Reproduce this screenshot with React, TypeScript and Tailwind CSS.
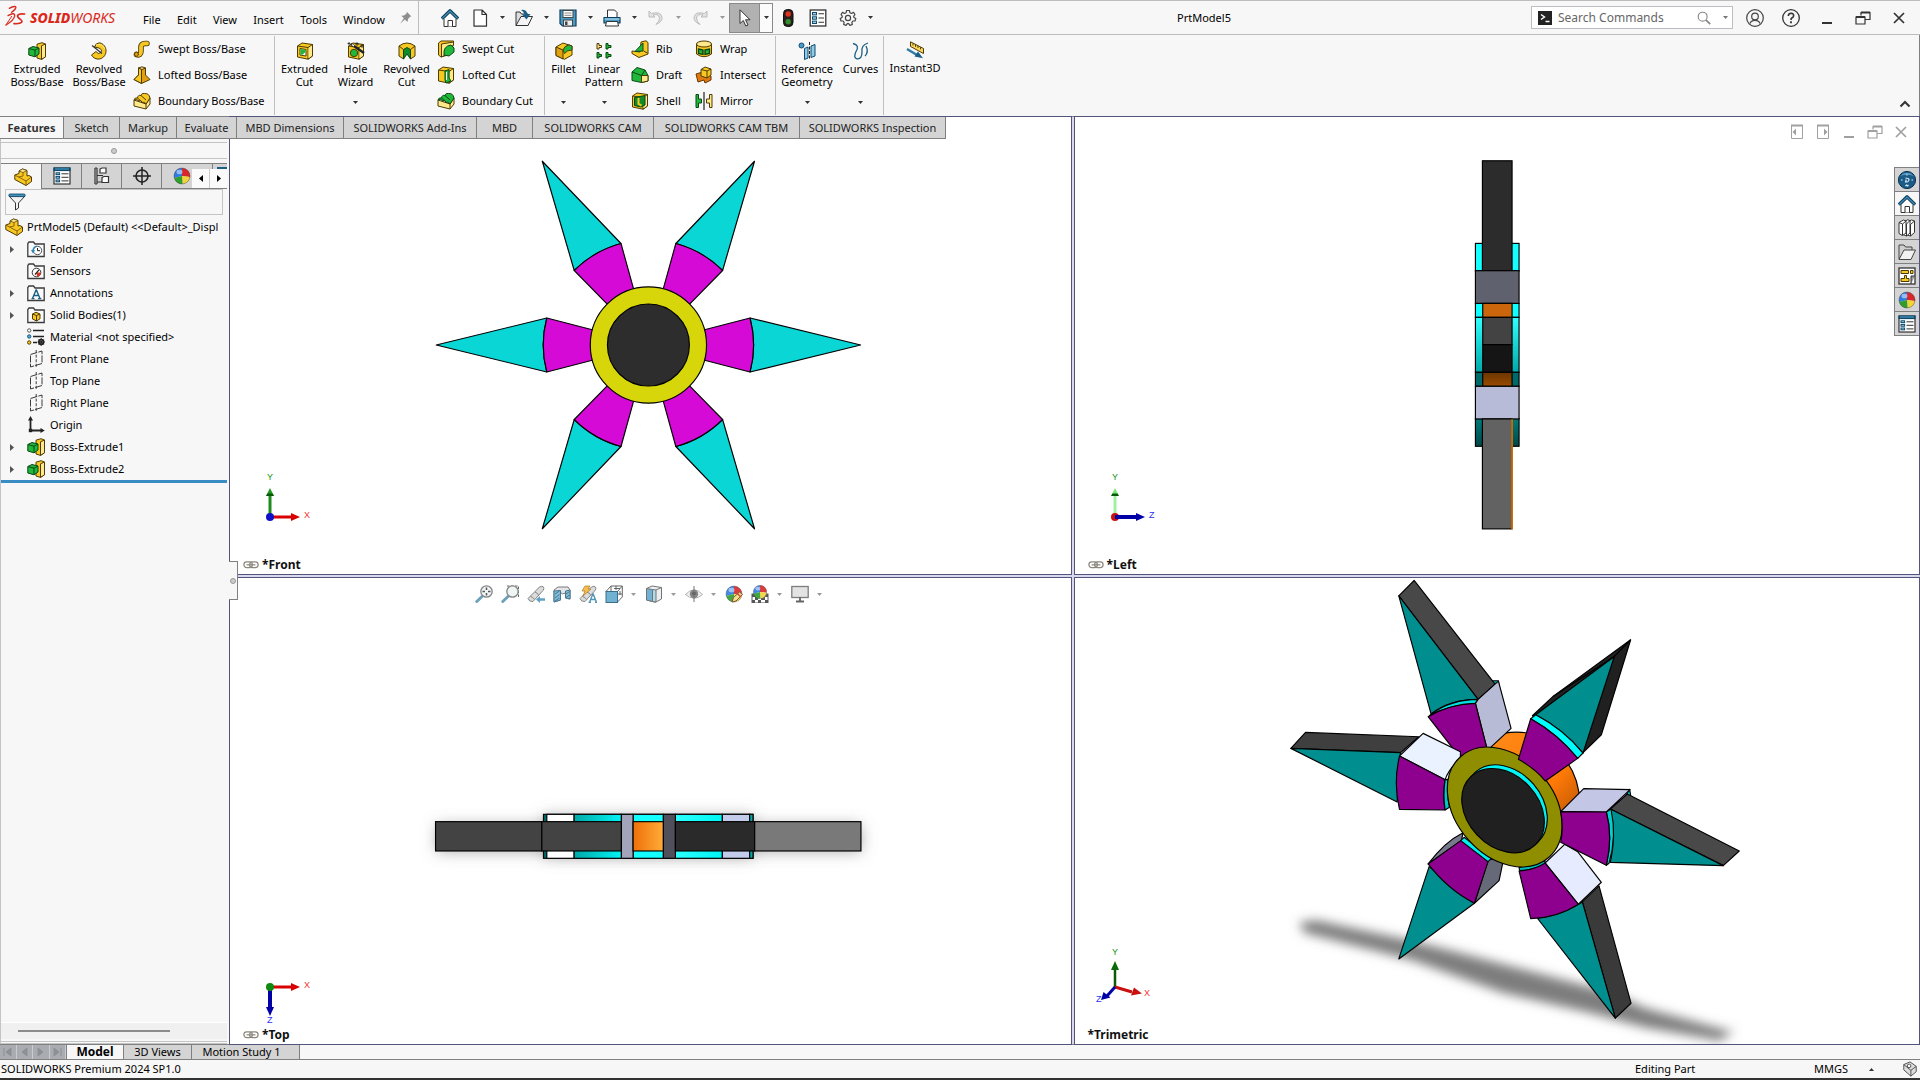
import React from "react";

type IconProps = { name: string; size?: number; className?: string };

const Y = "#f8c822";
const YD = "#e0a010";
const YL = "#ffe98a";
const G = "#1fb83a";
const GD = "#118a28";
const O = "#4f3b05";
const B = "#1b5e86";
const K = "#333333";

const houseIcon = (
  <g strokeLinejoin="round">
    <path d="M3 9.5V17.5H15V9.5L9 3.5Z" fill="#fdfdfd" stroke={K} />
    <path d="M7 17.5V11.5H11.5V17.5" fill="#fff" stroke={K} />
    <path d="M.8 9.6L9 1.6L17.2 9.6" fill="none" stroke="#0d3f5c" strokeWidth="3" />
    <path d="M1.3 9.4L9 2L16.7 9.4" fill="none" stroke="#3f93bf" strokeWidth="1.2" />
  </g>
);

const ball = (
  <g>
    <path d="M9 9L9 1A8 8 0 0 0 1.3 11Z" fill="#2e7be0" />
    <path d="M9 9L9 1A8 8 0 0 1 17 10Z" fill="#d8262a" />
    <path d="M9 9L17 10A8 8 0 0 1 9.5 17Z" fill="#f2d43a" />
    <path d="M9 9L9.5 17A8 8 0 0 1 1.3 11Z" fill="#2e9e2c" />
    <circle cx="9" cy="9" r="8" fill="none" stroke="#333" strokeOpacity=".5" strokeWidth=".8" />
    <ellipse cx="6.5" cy="5" rx="3" ry="2.3" fill="#fff" fillOpacity=".5" />
  </g>
);

const folderBase = (
  <path d="M.8 16.5V3.5L2 2H6.5L8 4H17.2V16.5Z" fill="#fafafa" stroke="#3c3c3c" strokeWidth="1.3" />
);

const planeIcon = (
  <g fill="none" stroke="#3c3c3c">
    <path d="M3.5 4.5L15 1V13.5L3.5 17Z" strokeWidth="1" strokeDasharray="7 1.2" />
    <path d="M9.2 0V18" strokeDasharray="3 1.6" />
  </g>
);

const listIcon = (
  <g>
    <rect x="1.2" y="1" width="15.6" height="16" fill="#fff" stroke={K} strokeWidth="1.3" />
    <g fill="#9fd0e8" stroke="#0d4a6e">
      <rect x="3.5" y="3.5" width="4" height="2.4" />
      <rect x="3.5" y="7.8" width="4" height="2.4" />
      <rect x="3.5" y="12.1" width="4" height="2.4" />
    </g>
    <path d="M9.5 4.8H15M9.5 9H15M9.5 13.3H15" stroke={K} strokeWidth="1.1" />
  </g>
);

const propsIcon = (
  <g>
    <rect x="1" y="1" width="16" height="16" fill="#fff" stroke={K} strokeWidth="1.2" />
    <rect x=".5" y=".5" width="17" height="3.6" fill="#0d4a6e" />
    <path d="M2 2H16" stroke="#56a7cf" />
    <g fill="#9fd0e8" stroke="#0d4a6e">
      <rect x="3" y="5.8" width="3.6" height="1.8" />
      <rect x="3" y="9.4" width="3.6" height="1.8" />
      <rect x="3" y="13" width="3.6" height="1.8" />
    </g>
    <path d="M8.5 6.8H15.5M8.5 10.3H15.5M8.5 13.9H15.5" stroke={K} />
  </g>
);

const partIcon = (
  <g stroke={O} strokeLinejoin="round">
    <path d="M.8 7L5 5.5V3L8.5 1L13 2.5V8L15 7.5L17.5 9V13.5L12 17.5L.8 11.500Z" fill={Y} />
    <path d="M5 3L9 4.5L13 2.5L8.5 1Z" fill={YL} strokeWidth=".7" />
    <path d="M.8 7L4.5 9L9 8V4.5M4.500 9L12 13L17.5 9M12 13V17.5" fill="none" stroke="#8a6208" />
  </g>
);

const extrudeIcon = (
  <g strokeLinejoin="round" stroke={O}>
    <path d="M9 2.2L14 .7L17.5 2V14.8L13.5 17.4L9 16Z" fill={Y} />
    <path d="M13.5 3.8L17.5 2V14.8L13.5 17.4Z" fill={YL} />
    <path d="M.8 6.5L5 4.5L11 6V12L7 14.8L.8 13Z" fill={G} stroke="#0a4716" />
    <path d="M.8 6.5L7 8.2L11 6M7 8.2V14.8" fill="none" stroke="#0a4716" />
  </g>
);

const box = (
  <g stroke={O} strokeLinejoin="round">
    <path d="M1.5 4L6 1L16.5 2.5V14L12 17.2L1.5 15Z" fill={Y} />
    <path d="M1.5 4L12 5.5V17.2L16.5 14V2.5L12 5.5" fill="none" />
    <path d="M12.5 6L16 3.5V13.8L12.5 16.2Z" fill={YL} stroke="none" />
  </g>
);

const waves = (top: string, edge: string) => (
  <g strokeLinejoin="round">
    <path d="M1 8L13 12L17 6V12L13 17L1 14Z" fill={YL} stroke={O} />
    <path d="M13 12V17" stroke={O} />
    <path d="M1 8Q2 5 4.5 6Q5 2.5 8 3.5Q9 .5 11.5 1.5Q16 1 17 6L13 12Q11.5 9 9.5 10.5Q7.5 7 6 9Q3.5 6.5 1 8Z" fill={top} stroke={edge} />
    <path d="M4.5 6L9.5 10.5M8 3.5L13 8" stroke={edge} fill="none" />
  </g>
);

const spyglass = (
  <g strokeLinejoin="round">
    <path d="M1 13.5L12.5 2Q15 .5 16.5 2Q17.5 3.5 16 5.5L6 16.5Q2 17 1 13.5Z" fill="#d9d9d9" stroke="#777" />
    <path d="M3.5 11.5Q6 12 7.5 14.5M8 7Q10 7.5 11.5 10" fill="none" stroke="#777" />
  </g>
);

const lens = (
  <g>
    <path d="M7 11.5L1.8 16.500" stroke="#5f97b5" strokeWidth="3" strokeLinecap="round" />
    <circle cx="11.5" cy="6.5" r="5.7" fill="#eef3f5" stroke="#777" strokeWidth="1.3" />
  </g>
);

const icons: Record<string, React.ReactNode> = {
  home: houseIcon,
  new: <path d="M3 1H11L15.5 5.5V17.2H3ZM11 1V5.5H15.5" fill="#fff" stroke={K} strokeWidth="1.2" strokeLinejoin="round" />,
  open: (
    <g strokeLinejoin="round">
      <path d="M1 16.5V3H5L6.5 5H13V16.5Z" fill="#ddd" stroke={K} />
      <path d="M1 16.5L6 7.5H17.5L13 16.5Z" fill="#f4f4f4" stroke={K} />
      <path d="M6 1Q11 0 12.5 5H15.5L11.5 10.5L7 5.5H9.5Q9 2.5 6 1Z" fill="#1b5e86" />
    </g>
  ),
  save: (
    <g>
      <path d="M1 1H17V17H3.5L1 14.5Z" fill="#4a9cc7" stroke="#0d3f5c" strokeWidth="1.2" />
      <rect x="4" y="1.5" width="10" height="7" fill="#fff" stroke="#444" />
      <path d="M5.5 4H12.5M5.5 6.3H12.5" stroke="#888" />
      <rect x="4.5" y="11" width="9" height="6" fill="#eee" stroke="#444" />
      <rect x="6" y="12.5" width="2.5" height="3.5" fill="#444" />
    </g>
  ),
  print: (
    <g strokeLinejoin="round">
      <path d="M4.5 8V1H11.5L14 3.5V8" fill="#fff" stroke={K} />
      <path d="M1 8.5H17V14H1Z" fill="#4a9cc7" stroke="#0d3f5c" strokeWidth="1.2" />
      <path d="M1.5 10H16.5" stroke="#bfe1f1" />
      <path d="M3.5 12.5H14.5L15.5 17H2.5Z" fill="#fff" stroke={K} />
    </g>
  ),
  undo: <path d="M2 2V8H8L6 6Q12 4.5 12.5 9Q12.5 12.5 9 15.5Q15.5 12.5 15 8.5Q14 2 4.5 4.5Z" fill="#e3e3e3" stroke="#bbb" strokeLinejoin="round" />,
  redo: <path d="M16 2V8H10L12 6Q6 4.5 5.5 9Q5.5 12.5 9 15.5Q2.5 12.5 3 8.5Q4 2 13.5 4.5Z" fill="#e3e3e3" stroke="#bbb" strokeLinejoin="round" />,
  cursor: <path d="M4 .8V14.5L7.3 11.5L9.8 17L12 16L9.5 10.8H14Z" fill="#fff" stroke="#333" strokeLinejoin="round" />,
  traffic: (
    <g>
      <rect x="4.5" y=".5" width="9.5" height="17" rx="4" fill="#2b1d1d" stroke="#111" />
      <circle cx="9.2" cy="5" r="2.7" fill="#e0301e" />
      <circle cx="9.2" cy="12.8" r="2.7" fill="#2f8f2c" />
    </g>
  ),
  options: listIcon,
  gear: (
    <g fill="none" stroke="#444">
      <circle cx="9" cy="9" r="2.6" strokeWidth="1.2" />
      <path d="M7.6 1.5H10.4L10.9 3.7L12.6 4.5L14.5 3.3L16 5.5L14.7 7.2L15 8.5L16.8 9.5L16 12L13.9 12L12.9 13.3L13.3 15.4L10.9 16.5L9.7 14.7H8.3L7.1 16.5L4.7 15.4L5.1 13.3L4.1 12L2 12L1.2 9.5L3 8.5L3.3 7.2L2 5.5L3.5 3.3L5.4 4.5L7.1 3.7Z" strokeWidth="1.2" strokeLinejoin="round" />
    </g>
  ),
  pin: <path d="M10 1L16 7L14 7.5L11.5 10.5L11 14L7.5 10.8L1.5 16.5L6.2 9.2L3 6L6.5 5.8L9.8 3.2Z" fill="#8d8d8d" />,
  extrude: extrudeIcon,
  revolve: (
    <g stroke={O} strokeLinejoin="round">
      <path d="M9.500 .8A7.800 8.200 0 1 1 1.5 13L6 9.5Q8 13 11 10.5Q13 7.5 9 6L4.5 5Q5.5 1 9.500 .8Z" fill={Y} />
      <path d="M2 3.5L12 11.5" stroke="#333" strokeWidth="1.2" />
      <path d="M6 3Q12 1 15 7" fill="none" stroke={YL} />
    </g>
  ),
  sweep: (
    <g fill="none" strokeLinecap="round">
      <path d="M3.5 14.5Q8 16 8 11V7Q8 3 14 3.5" stroke={O} strokeWidth="5.6" />
      <path d="M3.5 14.5Q8 16 8 11V7Q8 3 14 3.5" stroke={Y} strokeWidth="3.8" />
      <circle cx="3.5" cy="14.3" r="2" fill={YD} stroke={O} strokeWidth=".8" />
    </g>
  ),
  loft: (
    <g stroke={O} strokeLinejoin="round">
      <path d="M5.5 2V9L1 13.5L8.5 17.5L17 13.5L12.5 9V2Z" fill={YD} />
      <path d="M5.5 2V9L1 13.5L8.5 17.5V3Z" fill={Y} />
      <path d="M5.5 2L9 .8L12.5 2L9 3.5Z" fill={YL} />
    </g>
  ),
  boundary: waves(Y, O),
  extrudeCut: (
    <g>
      {box}
      <path d="M4 6.5L10 7.5V14L4 13Z" fill="#fff" stroke={O} />
      <path d="M4.5 7L9.5 7.8V10L6.5 12.8L4.5 12.6Z" fill={G} />
    </g>
  ),
  hole: (
    <g>
      {box}
      <circle cx="7" cy="11" r="3.7" fill={G} stroke={O} />
      <path d="M4 2L17 11" stroke="#222" strokeWidth="2.4" />
      <path d="M5 2.5L7 4" stroke="#fff" strokeWidth="1.4" />
      <path d="M10 0V4M8 2H12M15 2V6M13 4H17M2 0V3M.5 1.5H3.5" stroke="#222" strokeWidth=".8" />
    </g>
  ),
  revolveCut: (
    <g stroke={O} strokeLinejoin="round">
      <path d="M1 4Q9 -2 17 4V14L12.5 17V10L9 7.5L5.5 10V17L1 14Z" fill={Y} />
      <path d="M5.5 7.5L9 5.5L12.5 7.5V17L9 12L5.5 17Z" fill={GD} stroke="#0a4716" />
      <path d="M1 4L5.5 7.5M17 4L12.5 7.5" fill="none" />
    </g>
  ),
  sweepCut: (
    <g strokeLinejoin="round">
      <path d="M1.5 3L4 1H16.5V5L11 15L4 17L1.5 15Z" fill={Y} stroke={O} />
      <path d="M4.5 4L16.5 2V5L13 8Q8 8 8 15L4.5 17Z" fill={YL} stroke={O} />
      <path d="M7 15Q6 6 14 5L17 8L17 12L12 16Z" fill={G} stroke="#0a4716" />
    </g>
  ),
  loftCut: (
    <g>
      {box}
      <path d="M8 5L12 3.5V12L14 15L9 17L8 14Z" fill={G} stroke="#0a4716" />
      <path d="M9.5 6V14" stroke="#fff" />
    </g>
  ),
  boundaryCut: waves(G, "#0a4716"),
  fillet: (
    <g stroke={O} strokeLinejoin="round">
      <path d="M1 5L8 1L17 4V13L9.5 17.3L1 13.5Z" fill={Y} />
      <path d="M1 5L8 8V17L1 13.5Z" fill={YD} />
      <path d="M8 8Q9 4 14 2.8L17 4V8Q12 8 9.5 11.5Z" fill={G} />
    </g>
  ),
  linear: (
    <g strokeWidth="1">
      <path d="M2 1.5V7H4V5.5H6.5V3.5H4V1.5Z" fill={YL} stroke={O} />
      <path d="M11 1.5V7H13V5.5H16V3.5H13V1.5Z" fill={G} stroke="#0a4716" />
      <path d="M2 10.5V16H4V14.5H6.5V12.5H4V10.5Z" fill={G} stroke="#0a4716" />
      <path d="M11 10.5V16H13V14.5H16V12.5H13V10.5Z" fill={G} stroke="#0a4716" />
    </g>
  ),
  rib: (
    <g strokeLinejoin="round">
      <path d="M10 2L15 .8L17 2.5V14L8 17.5L1 13.5V11L9 12Z" fill={Y} stroke={O} />
      <path d="M12 3L12 11L4 11.5Z" fill={G} stroke="#0a4716" />
      <path d="M12.5 11L16.5 13" stroke={O} />
    </g>
  ),
  draft: (
    <g stroke={O} strokeLinejoin="round">
      <path d="M1 6L6 1.5L14 4L17 9.5V15L10.5 16.5L1 14.5Z" fill={G} stroke="#0a4716" />
      <path d="M10.5 9.5L17 9.5V15L10.5 16.5Z" fill={YL} />
      <path d="M1 6L10.5 9.5L14 4" fill="none" stroke="#0a4716" />
    </g>
  ),
  shell: (
    <g>
      {box}
      <path d="M3.5 5.5L14 3.5V13L10 15L3.5 13.5Z" fill={GD} stroke="#0a4716" />
      <path d="M7.5 6V12L10.5 13.5" stroke={Y} strokeWidth="2" fill="none" />
    </g>
  ),
  wrap: (
    <g stroke={O}>
      <path d="M1.5 4V14Q9 19.5 16.5 14V4Z" fill={Y} />
      <ellipse cx="9" cy="4" rx="7.5" ry="3" fill={YL} />
      <path d="M3.5 9L8 10V14.5L3.5 13.5ZM10 10L14.5 9V13.5L10 14.5Z" fill={G} stroke="#0a4716" strokeWidth="1.4" />
    </g>
  ),
  intersect: (
    <g strokeLinejoin="round">
      <path d="M1 8L6 6.5L16 10V14L10 17L9 14L3 16Z" fill="#e07a10" stroke="#6b3500" />
      <path d="M6 3.5L10 1L16 3V9L12 12L6 10Z" fill={Y} stroke={O} />
      <path d="M6 3.5L12 5V12M12 5L16 3" fill="none" stroke={O} />
    </g>
  ),
  mirror: (
    <g>
      <path d="M1 2.5V15.5H3.5V11H6.5V7H3.5V2.5Z" fill={G} stroke="#0a4716" />
      <path d="M17 2.5V15.5H14.5V11H11.5V7H14.5V2.5Z" fill={YL} stroke={O} />
      <path d="M9 0V18" stroke="#222" strokeWidth="1.2" />
    </g>
  ),
  reference: (
    <g>
      <circle cx="3.5" cy="3.5" r="2.5" fill="#4a9cc7" stroke="#0d4a6e" />
      <path d="M6.5 6.5L10 5V16L6.5 17.5ZM13 4L17 2.5V14L13 15.5Z" fill="#8fc9e6" stroke="#0d4a6e" />
      <path d="M11.5 0V18" stroke="#222" strokeDasharray="3 1.5" />
    </g>
  ),
  curves: <path d="M1 1.5Q8 3 4 9.5Q1 16 5 16.8Q10 17.5 10 10Q9 3 16 1M14 4Q17 10 13 14" fill="none" stroke={B} strokeWidth="1.3" />,
  instant3d: (
    <g>
      <path d="M4.5 .8L17.5 7.5V12.5L4.5 5.5Z" fill="#fbd85d" stroke={O} />
      <path d="M7 2.5V4.5M9.5 3.8V5.8M12 5V7M14.5 6.3V8.3" stroke={O} />
      <path d="M1 8L11 14" stroke="#2d7ba6" strokeWidth="2.4" />
      <path d="M12 10.5L17 17.2L8.5 15.5Z" fill="#1b5e86" />
    </g>
  ),
  part: partIcon,
  props: propsIcon,
  config: (
    <g fill="#fff" stroke={K} strokeWidth="1.2">
      <path d="M2 1V17M4 1V17M4 8.5H10M4 15H10M2 1H4M2 17H4" fill="none" />
      <path d="M7 2L9 1H13V6H7ZM9 10.5L11 9.5H15.5V15.5H9Z" />
    </g>
  ),
  target: (
    <g fill="none" stroke="#222">
      <circle cx="9" cy="9" r="6" strokeWidth="1.6" />
      <path d="M9 0V18M0 9H18" strokeWidth="1.5" />
    </g>
  ),
  ball,
  ballPencil: (
    <g>
      {ball}
      <path d="M7 17L8.500 12.500L14.500 7L17.500 9.500L11 16Z" fill="#f8d98a" stroke="#6a4a10" />
      <path d="M12.500 8.800L15.500 11.500" stroke="#c8302a" strokeWidth="1.4" />
    </g>
  ),
  scene: (
    <g>
      <rect x="1" y="9" width="16" height="9" fill="#fff" stroke="#444" />
      <path d="M1 9H5V12H1ZM13 9H17V12H13ZM4 12H7V15H4ZM10 12H14V15H10ZM1 15H4V18H1ZM7 15H10V18H7ZM14 15H17V18H14Z" fill="#444" />
      <g transform="translate(1.5 -.5) scale(.83)">{ball}</g>
    </g>
  ),
  filter: (
    <g strokeLinejoin="round">
      <path d="M1 3L7.5 10V17L10.5 15V10L17 3Z" fill="#f2f2f2" stroke={K} />
      <rect x=".8" y="1" width="16.4" height="2.6" rx="1.2" fill="#3f93bf" stroke="#0d3f5c" strokeWidth=".8" />
    </g>
  ),
  fHistory: (
    <g>
      {folderBase}
      <circle cx="10.5" cy="10.5" r="4.2" fill="#fff" stroke="#555" />
      <path d="M10.5 8V10.7H13" fill="none" stroke="#222" />
      <path d="M4 10H8L6 13.5Z" fill="#2d86b5" />
      <path d="M6 11Q6.5 6.5 10 6.3" stroke="#2d86b5" strokeWidth="1.6" fill="none" />
    </g>
  ),
  fSensor: (
    <g>
      {folderBase}
      <circle cx="9.5" cy="10.5" r="4.3" fill="#fff" stroke="#333" />
      <path d="M9.5 10.5L13.7 10.5A4.2 4.2 0 0 1 10 14.7Z" fill="#e0301e" />
      <path d="M8 12.5L12 7.8" stroke="#222" strokeWidth="1.2" />
    </g>
  ),
  fAnnot: (
    <g>
      {folderBase}
      <path d="M9.2 5.5L5.5 14.5M9.2 5.5L13 14.5M6.8 11.5H11.8M4.5 14.6H7.5M11 14.6H14.3" stroke="#1b5e86" strokeWidth="1.4" fill="none" />
    </g>
  ),
  fBody: (
    <g>
      {folderBase}
      <path d="M5.5 8L9 6.3L13 8V12.8L9.5 15L5.5 13Z" fill={Y} stroke={O} />
      <path d="M5.5 8L9.5 9.5L13 8M9.5 9.5V15" fill="none" stroke={O} />
    </g>
  ),
  material: (
    <g>
      <circle cx="2.2" cy="2.5" r="1.7" fill="#fff" stroke="#555" />
      <circle cx="2.2" cy="8.5" r="1.7" fill="#4fa6d3" stroke="#1b5e86" />
      <circle cx="2.2" cy="14.5" r="1.7" fill={Y} stroke={O} />
      <path d="M6 2.5H17M6 8.5H17M6 14.5H10" stroke="#222" strokeWidth="1.4" />
      <circle cx="14.2" cy="14" r="2.3" fill="none" stroke="#222" strokeWidth="1.8" />
      <path d="M14.2 10V18M10.5 14H18M11.7 11.5L16.7 16.5M16.7 11.5L11.7 16.5" stroke="#222" strokeWidth=".9" />
    </g>
  ),
  plane: planeIcon,
  origin: (
    <g>
      <path d="M3.5 3V14.5H14" fill="none" stroke="#222" strokeWidth="1.8" />
      <path d="M3.5 0L6 4.5H1ZM17.8 14.5L13.5 17V12Z" fill="#222" />
      <rect x="1.8" y="12.8" width="3.4" height="3.4" fill="#222" />
    </g>
  ),
  compass: (
    <g>
      <circle cx="9" cy="9" r="8.6" fill="#1a5b88" stroke="#0a3450" />
      <path d="M2 5Q9 -1.5 16 5Q9 2.500 2 5Z" fill="#5f9fc6" />
      <path d="M7.500 7Q12.500 7.500 10.500 10Q9.500 11.300 7.500 11L8.300 8.500" fill="none" stroke="#e6f4fc" strokeWidth="1.1" />
      <path d="M3 9H4.5M13.5 9H15M9 3.3V4.6M7.5 15L8.5 14L9.5 15L10.5 14" stroke="#d9eefa" strokeWidth="1.1" fill="none" />
    </g>
  ),
  books: (
    <g fill="#fff" stroke={K} strokeLinejoin="round">
      <path d="M9 4L13.5 1L16.5 2V13.5L12.5 17L9 16Z" />
      <path d="M5 3.5L9.5 .8L12 1.5V14L8.5 17L5 15.5Z" />
      <path d="M1 3.5L5.5 1L8 2V14L4.5 16.5L1 14.5Z" />
      <path d="M4.5 5V16.5M8.5 5V17M12.5 5.5V17M1 3.5L4.5 5L8 2M8.5 5L12 1.5M12.5 5.5L16.5 2" fill="none" />
    </g>
  ),
  folder: (
    <g stroke="#444" strokeLinejoin="round">
      <path d="M1 16V2H6L7.5 4H14V7" fill="#cfcfcf" />
      <path d="M1 16.5L6 7H17.5L13 16.5Z" fill="#f1f1f1" />
    </g>
  ),
  palette: (
    <g>
      <rect x="1" y="1" width="16" height="16" fill="#fff" stroke={K} strokeWidth="1.3" />
      <path d="M3 3.5H10.5V6.5H3ZM12.5 3.5H15V6.5H12.5ZM6.5 8.5H8.5V11.5H11V14.5H3V11.5H6.5Z" fill={Y} stroke={O} />
      <path d="M13 17V9H17" fill="#999" stroke={K} />
    </g>
  ),
  zoomFit: (
    <g>
      {lens}
      <path d="M11.5 2.5V5M11.5 8V10.5M7.5 6.5H10M13 6.5H15.5" stroke="#444" strokeWidth="1.5" />
    </g>
  ),
  zoomArea: (
    <g>
      <path d="M6 1H17.5V12" fill="none" stroke="#555" strokeDasharray="2.5 1.5" />
      {lens}
    </g>
  ),
  prevView: (
    <g>
      {spyglass}
      <path d="M9 14.5L13 11V13.3H18V15.7H13V18Z" fill="#5296bb" />
    </g>
  ),
  section: (
    <g stroke="#6a6a6a" strokeLinejoin="round">
      <path d="M1 5L5 2L15 2L17 5V14L12.5 13V8Q9 10 7.5 7.5V15L1 17Z" fill="#e3e3e3" />
      <path d="M1 6L7.5 5.5V15L1 17ZM12.5 6L17 5V14L12.5 13Z" fill="#7ab4d2" stroke="#2f6a8a" />
      <path d="M2 9L6.5 6M2 13L6.5 9.5M2 16L6.5 13M13 9L16.5 6.5M13 12.5L16.5 10" stroke="#2f6a8a" />
    </g>
  ),
  dynamic: (
    <g>
      {spyglass}
      <path d="M6 1H11L9 4H12L4 11L6 6H3Z" fill="#f6b73c" stroke="#a86a10" strokeWidth=".7" />
      <path d="M14 8.5L10.5 17.5M14 8.5L17.5 17.5M11.8 14.5H16.5M9.5 17.5H12M16 17.5H18" stroke="#4288b0" strokeWidth="1.4" />
    </g>
  ),
  orient: (
    <g>
      <path d="M1 6.5L6 1H17.3V12L12.5 17" fill="#fff" stroke="#555" />
      <path d="M6 1V6M12.5 6.5L17.3 1M9 3.5H15M15 6V10M12 9H17M11 .8V5" stroke="#555" fill="none" />
      <rect x="1" y="6.5" width="11.5" height="11" fill="#62a9ce" stroke="#25607f" />
    </g>
  ),
  display: (
    <g stroke="#666" strokeLinejoin="round">
      <path d="M1.5 3.5L7 1L16.5 2.5V14L10.5 17.3L1.5 15Z" fill="#e9eef0" />
      <path d="M1.5 3.5L7.5 4.5V16.5L1.5 15Z" fill="#62a9ce" />
      <path d="M7.5 4.5L11 5V17L7.5 16.5Z" fill="#a9d6ec" />
      <path d="M11 5L16.5 2.5" />
    </g>
  ),
  eye: (
    <g>
      <path d="M.5 9.5Q9 0 17.5 9.5Q9 17 .5 9.5Z" fill="#efefef" stroke="#aaa" />
      <circle cx="9" cy="9" r="4.2" fill="#777" />
      <circle cx="9" cy="8.5" r="1.7" fill="#444" />
      <path d="M9 1V17" stroke="#666" />
    </g>
  ),
  monitor: (
    <g>
      <rect x=".8" y="1.5" width="16.4" height="11" fill="#e1e1e1" stroke="#6f6f6f" strokeWidth="1.3" />
      <path d="M9 12.5V16M5 16.5H13" stroke="#555" strokeWidth="1.8" />
    </g>
  ),
  user: (
    <g fill="none" stroke="#444" strokeWidth="1.2">
      <circle cx="9" cy="9" r="8.3" />
      <circle cx="9" cy="7.5" r="3.3" />
      <path d="M4 14.5Q5 11.3 9 11.3Q13 11.3 14 14.5" />
    </g>
  ),
  help: (
    <g fill="none" stroke="#333">
      <circle cx="9" cy="9" r="8.3" strokeWidth="1.3" />
      <path d="M6.3 7Q6.5 4.3 9.2 4.3Q11.8 4.5 11.6 6.8Q11.3 8.3 9.8 9Q9 9.5 9 11" strokeWidth="1.6" />
      <path d="M9 12.3V14.2" strokeWidth="1.8" />
    </g>
  ),
  min: <path d="M4 14H14" stroke="currentColor" strokeWidth="2" />,
  restore: (
    <g fill="none" stroke="currentColor" strokeWidth="1.2">
      <path d="M7 6.5V3.5H16V10.5H11" />
      <path d="M2 8H11V15H2Z" />
      <path d="M7 3.5H16M2 8H11" strokeWidth="2" />
    </g>
  ),
  close: <path d="M4 4L14 14M14 4L4 14" stroke="currentColor" strokeWidth="1.7" />,
  paneLeft: (
    <g>
      <path d="M3.5 2.5H14.5V15.5H3.5Z" fill="none" stroke="currentColor" />
      <path d="M3 2.5H15" stroke="currentColor" strokeWidth="2" />
      <path d="M8 5.5V12.5L4.5 9Z" fill="currentColor" />
    </g>
  ),
  paneRight: (
    <g>
      <path d="M3.5 2.5H14.5V15.5H3.5Z" fill="none" stroke="currentColor" />
      <path d="M3 2.5H15" stroke="currentColor" strokeWidth="2" />
      <path d="M10 5.5V12.5L13.5 9Z" fill="currentColor" />
    </g>
  ),
  search: (
    <g fill="none" stroke="#8a8a8a">
      <circle cx="7.5" cy="7.5" r="5" strokeWidth="1.3" />
      <path d="M11 11L16 16" strokeWidth="2" />
    </g>
  ),
  tag: (
    <g stroke="#444" strokeLinejoin="round">
      <path d="M2 4L9 1L16 6V12L10 17L2 10Z" fill="#ddd" />
      <path d="M2 4L10 10.5L16 6M10 10.5V17" fill="none" />
      <circle cx="8" cy="5.5" r="2" fill="#fff" />
    </g>
  ),
  chain: (
    <g fill="none" stroke="#8c887f" strokeWidth="1.4">
      <rect x="1" y="5.5" width="9.5" height="6.5" rx="3.2" />
      <rect x="7.5" y="5.5" width="9.5" height="6.5" rx="3.2" />
      <path d="M4 8.8H14" />
    </g>
  ),
};

function Icon({ name, size = 18, className = "" }: IconProps) {
  return (
    <svg width={size} height={size} viewBox="0 0 18 18" className={`shrink-0 ${className}`} aria-hidden="true">
      {icons[name]}
    </svg>
  );
}

function Caret({ className = "text-[#333]" }: { className?: string }) {
  return (
    <svg width="5" height="3" viewBox="0 0 5 3" className={`shrink-0 ${className}`} aria-hidden="true">
      <path d="M0 0H5L2.5 3Z" fill="currentColor" />
    </svg>
  );
}

function Logo() {
  return (
    <div className="flex h-full w-[135px] shrink-0 items-center pl-[5px] text-[#da291c]">
      <svg width="21" height="22" viewBox="0 0 63 66" aria-label="3DS" className="mb-1">
        <g fill="none" stroke="currentColor" strokeLinecap="round" strokeLinejoin="round">
          <path d="M13 10Q24 3 32 5Q36 9 20 22" strokeWidth="4" />
          <path d="M9 32Q30 20 29 33Q27 46 3 60" strokeWidth="4" />
          <path d="M20 34L3 60" strokeWidth="3" />
          <path d="M59 27Q42 25 38 31Q36 37 46 43Q56 50 46 54Q38 57 27 56" strokeWidth="5" />
        </g>
      </svg>
      <span className="ml-1 text-[14px] leading-4 italic">
        <b className="font-extrabold">SOLID</b>WORKS
      </span>
    </div>
  );
}

const quick: { name: string; label: string; caret: boolean; dim?: boolean }[] = [
  { name: "home", label: "Home", caret: false },
  { name: "new", label: "New", caret: true },
  { name: "open", label: "Open", caret: true },
  { name: "save", label: "Save", caret: true },
  { name: "print", label: "Print", caret: true },
  { name: "undo", label: "Undo", caret: true, dim: true },
  { name: "redo", label: "Redo", caret: true, dim: true },
];

function TitleBar() {
  return (
    <header className="flex h-[35px] shrink-0 items-center border-t border-b border-[#bcbcbc] bg-[#f7f7f7]">
      <Logo />
      <nav className="flex h-full w-[258px] shrink-0 items-center justify-between" aria-label="Main menu">
        {["File", "Edit", "View", "Insert", "Tools", "Window"].map((m) => (
          <button key={m} className="h-full px-2 pt-1">{m}</button>
        ))}
      </nav>
      <button aria-label="Pin menu" className="flex w-[25px] shrink-0 justify-center">
        <Icon name="pin" size={14} />
      </button>
      <div className="mr-4 h-full w-px shrink-0 bg-[#bcbcbc]" />
      {quick.map((q) => (
        <div key={q.name} className="flex h-full items-center">
          <button aria-label={q.label} className="flex w-[30px] justify-center"><Icon name={q.name} /></button>
          {q.caret && (
            <button aria-label={`${q.label} options`} className="flex h-5 w-[14px] items-center justify-center">
              <Caret className={q.dim ? "text-[#999]" : "text-[#333]"} />
            </button>
          )}
        </div>
      ))}
      <div className="flex h-[30px] w-[44px] shrink-0 border border-[#8a8a8a]">
        <button aria-label="Select" className="flex flex-1 items-center justify-center bg-[#b1b1b1]"><Icon name="cursor" /></button>
        <button aria-label="Select options" className="flex w-[13px] items-center justify-center border-l border-[#8a8a8a] bg-[#fbfbfb]"><Caret /></button>
      </div>
      <button aria-label="Rebuild" className="flex w-[30px] justify-center"><Icon name="traffic" /></button>
      <button aria-label="File properties" className="flex w-[30px] justify-center"><Icon name="options" /></button>
      <button aria-label="Settings" className="flex w-[30px] justify-center"><Icon name="gear" /></button>
      <button aria-label="Settings options" className="flex h-5 w-[14px] items-center justify-center"><Caret /></button>
      <h1 className="flex-1 text-center">PrtModel5</h1>
      <label className="flex h-[23px] w-[202px] shrink-0 items-center border border-[#bcbcc4] bg-white pl-1.5">
        <svg width="14" height="14" viewBox="0 0 14 14" aria-hidden="true">
          <rect width="14" height="14" fill="#222" />
          <path d="M3 3.5L6.5 6L3 8.5M7.5 10.5H11.5" fill="none" stroke="#fff" strokeWidth="1.4" />
        </svg>
        <input aria-label="Search Commands" placeholder="Search Commands" className="ml-1.5 w-0 flex-1 bg-transparent text-[12px] outline-none placeholder:text-[#666]" />
        <Icon name="search" size={16} />
        <span className="ml-1.5 flex w-[14px] justify-center"><Caret className="text-[#777]" /></span>
      </label>
      <div className="mr-[3px] ml-1 flex text-[#333]">
        {[["user", "Account"], ["help", "Help"], ["min", "Minimize"], ["restore", "Restore"], ["close", "Close"]].map(([n, l]) => (
          <button key={n} aria-label={l} className="flex w-[36px] justify-center"><Icon name={n} /></button>
        ))}
      </div>
    </header>
  );
}

function Big({ icon, lines, width, caret = false }: { icon: string; lines: string[]; width: string; caret?: boolean }) {
  return (
    <button className={`flex h-full shrink-0 flex-col items-center pt-[6px] leading-[13px] ${width}`}>
      <Icon name={icon} />
      <span className="mt-[2px] flex flex-col whitespace-nowrap">
        {lines.map((l) => <span key={l}>{l}</span>)}
      </span>
      {caret && <Caret className="mt-auto mb-[11px] text-[#333]" />}
    </button>
  );
}

function Small({ items, width }: { items: [string, string][]; width: string }) {
  return (
    <div className={`flex shrink-0 flex-col ${width}`}>
      {items.map(([icon, label]) => (
        <button key={label} className="flex h-[26px] items-center gap-[7px] whitespace-nowrap">
          <Icon name={icon} /> {label}
        </button>
      ))}
    </div>
  );
}

function Group({ children, className = "" }: { children: React.ReactNode; className?: string }) {
  return <div className={`my-px flex border-r border-[#c0c0c0] ${className}`}>{children}</div>;
}

function Ribbon() {
  return (
    <section aria-label="Features" className="flex h-[82px] shrink-0 border-r border-b border-[#808080] bg-[#f7f7f7]">
      <Group className="pl-1.5">
        <Big icon="extrude" lines={["Extruded", "Boss/Base"]} width="w-[62px]" />
        <Big icon="revolve" lines={["Revolved", "Boss/Base"]} width="w-[62px]" />
        <Small width="ml-[3px] w-[141px]" items={[["sweep", "Swept Boss/Base"], ["loft", "Lofted Boss/Base"], ["boundary", "Boundary Boss/Base"]]} />
      </Group>
      <Group className="pl-1">
        <Big icon="extrudeCut" lines={["Extruded", "Cut"]} width="w-[51px]" />
        <Big icon="hole" lines={["Hole", "Wizard"]} width="w-[51px]" caret />
        <Big icon="revolveCut" lines={["Revolved", "Cut"]} width="w-[51px]" />
        <Small width="ml-[5px] w-[107px]" items={[["sweepCut", "Swept Cut"], ["loftCut", "Lofted Cut"], ["boundaryCut", "Boundary Cut"]]} />
      </Group>
      <Group>
        <Big icon="fillet" lines={["Fillet"]} width="w-[37px]" caret />
        <Big icon="linear" lines={["Linear", "Pattern"]} width="w-[44px]" caret />
        <Small width="ml-[5px] w-[64px]" items={[["rib", "Rib"], ["draft", "Draft"], ["shell", "Shell"]]} />
        <Small width="w-[80px]" items={[["wrap", "Wrap"], ["intersect", "Intersect"], ["mirror", "Mirror"]]} />
      </Group>
      <Group>
        <Big icon="reference" lines={["Reference", "Geometry"]} width="w-[62px]" caret />
        <Big icon="curves" lines={["Curves"]} width="w-[45px]" caret />
      </Group>
      <Big icon="instant3d" lines={["Instant3D"]} width="w-[62px]" />
      <button aria-label="Collapse ribbon" className="mt-auto mr-2 mb-2 ml-auto">
        <svg width="12" height="8" viewBox="0 0 12 8" aria-hidden="true"><path d="M1.5 6.5L6 2L10.5 6.5" fill="none" stroke="#333" strokeWidth="2" /></svg>
      </button>
    </section>
  );
}

const ribbonTabs: [string, string][] = [
  ["Features", "w-[64px]"],
  ["Sketch", "w-[56px]"],
  ["Markup", "w-[57px]"],
  ["Evaluate", "w-[60px]"],
  ["MBD Dimensions", "w-[107px]"],
  ["SOLIDWORKS Add-Ins", "w-[133px]"],
  ["MBD", "w-[56px]"],
  ["SOLIDWORKS CAM", "w-[121px]"],
  ["SOLIDWORKS CAM TBM", "w-[146px]"],
  ["SOLIDWORKS Inspection", "w-[146px]"],
];

function RibbonTabs() {
  return (
    <nav aria-label="Command tabs" className="absolute top-0 left-0 z-10 flex h-[22px]">
      {ribbonTabs.map(([label, w], i) => (
        <button
          key={label}
          className={`border-r border-b border-[#808080] whitespace-nowrap ${w} ${i === 0 ? "bg-[#f7f7f7] font-bold text-[#333]" : "bg-[#d4d4d4] text-[#222]"}`}
        >
          {label}
        </button>
      ))}
    </nav>
  );
}

const tree: [string, string, boolean][] = [
  ["fHistory", "Folder", true],
  ["fSensor", "Sensors", false],
  ["fAnnot", "Annotations", true],
  ["fBody", "Solid Bodies(1)", true],
  ["material", "Material <not specified>", false],
  ["plane", "Front Plane", false],
  ["plane", "Top Plane", false],
  ["plane", "Right Plane", false],
  ["origin", "Origin", false],
  ["extrude", "Boss-Extrude1", true],
  ["extrude", "Boss-Extrude2", true],
];

function Sidebar() {
  return (
    <aside className="flex w-[230px] shrink-0 flex-col border-r border-l border-r-[#808080] border-l-[#c4c4c4] bg-[#f7f7f7] pt-[25px] pr-[2px]">
      <div className="flex h-[17px] shrink-0 items-center justify-center border-t border-b border-[#c4c4c4]">
        <span className="size-[6px] rounded-full border border-[#999] bg-[#ccc]" />
      </div>
      <div className="mt-1 flex h-[26px] shrink-0 border-t border-[#808080]">
        <button aria-label="FeatureManager tree" className="flex w-[41px] items-center justify-center border-r border-[#808080] pl-1"><Icon name="part" /></button>
        {[["props", "Properties"], ["config", "Configurations"], ["target", "Dimensions"]].map(([n, l]) => (
          <button key={n} aria-label={l} className="flex w-[40px] items-center justify-center border-r border-b border-[#808080] bg-[#d4d4d4]"><Icon name={n} /></button>
        ))}
        <button aria-label="Display" className="flex w-[30px] items-center justify-end border-b border-[#808080] bg-[#d4d4d4] pr-px"><Icon name="ball" /></button>
        <div className="flex flex-1 flex-col border-b border-[#808080] bg-[#d4d4d4]">
          <div className="ml-auto flex h-[5px] w-[15px] items-end border-l border-[#808080] pl-1">
            <div className="h-[2px] flex-1 bg-[#1b5e86]" />
          </div>
          <div className="flex flex-1">
            <button aria-label="Scroll left" className="flex flex-1 items-center justify-center border-r border-[#ccc] bg-[#fafafa]">
              <svg width="4" height="7" viewBox="0 0 4 7" aria-hidden="true"><path d="M4 0V7L0 3.5Z" /></svg>
            </button>
            <button aria-label="Scroll right" className="flex flex-1 items-center justify-center bg-[#fafafa]">
              <svg width="4" height="7" viewBox="0 0 4 7" aria-hidden="true"><path d="M0 0V7L4 3.5Z" /></svg>
            </button>
          </div>
        </div>
      </div>
      <label className="mr-[4px] ml-1 flex h-[26px] shrink-0 items-center border border-[#c4c4c4] pl-[2px]">
        <Icon name="filter" />
        <input aria-label="Filter tree" className="ml-1 w-0 flex-1 bg-transparent outline-none" />
      </label>
      <ul className="border-b-[3px] border-[#3a8dc4]">
        <li className="flex h-[23px] items-center gap-1 pl-1 whitespace-nowrap">
          <Icon name="part" />
          <span>PrtModel5 (Default) &lt;&lt;Default&gt;_Displ</span>
        </li>
        {tree.map(([icon, label, open]) => (
          <li key={label} className="flex h-[22px] items-center">
            <span className="flex w-[26px] shrink-0 justify-start pl-[9px]">
              {open && (
                <button aria-label={`Expand ${label}`}>
                  <svg width="4" height="7" viewBox="0 0 4 7" aria-hidden="true"><path d="M0 0V7L4 3.5Z" fill="#555" /></svg>
                </button>
              )}
            </span>
            <Icon name={icon} />
            <span className="ml-[5px] whitespace-nowrap">{label}</span>
          </li>
        ))}
      </ul>
      <div className="mt-auto flex h-[17px] shrink-0 items-center border-t border-white bg-[#f0f0f0] pl-[17px]">
        <div className="h-[2px] w-[152px] bg-[#8c8c8c]" />
      </div>
      <div className="mt-[2px] h-[3px] shrink-0 border-t border-b border-[#c4c4c4]" />
    </aside>
  );
}

function Triad({ kind }: { kind: "front" | "left" | "top" | "tri" }) {
  const label = { fontSize: 9, fontFamily: "Liberation Sans, sans-serif" };
  return (
    <svg className="absolute bottom-[17px] left-[10px]" width="80" height="85" viewBox="0 0 80 85" aria-label={`${kind} axes`}>
      {(kind === "front" || kind === "left") && (
        <g>
          <path d="M30 45V23" stroke={kind === "front" ? "#1f8a1f" : "#9ff29f"} strokeWidth="3" />
          <path d="M30 16L26 24H34Z" fill={kind === "front" ? "#1f9a1f" : "#7be67b"} />
          <path d="M26 24H34L32.5 21.5H27.5Z" fill="#0a5a0a" />
          <text x="27" y="8" fill="#139013" style={label}>Y</text>
        </g>
      )}
      {(kind === "front" || kind === "top") && (
        <g>
          <path d="M30 45H53" stroke="#d80000" strokeWidth="3" />
          <path d="M60 45L51 41V49Z" fill="#d80000" />
          <text x="64" y="46" fill="#f03030" style={label}>X</text>
        </g>
      )}
      {kind === "left" && (
        <g>
          <circle cx="30" cy="45" r="4" fill="#c81010" />
          <path d="M30 45H53" stroke="#0000a8" strokeWidth="4" />
          <path d="M60 45L51 41V49Z" fill="#0000a8" />
          <text x="64" y="46" fill="#3030f0" style={label}>Z</text>
        </g>
      )}
      {kind === "front" && <circle cx="30" cy="45" r="4" fill="#1010c8" />}
      {kind === "top" && (
        <g>
          <path d="M30 45V66" stroke="#0000a8" strokeWidth="4" />
          <path d="M30 74L26 65H34Z" fill="#0000a8" />
          <circle cx="30" cy="45" r="4" fill="#0f8a0f" />
          <text x="27" y="81" fill="#3030f0" style={label}>Z</text>
        </g>
      )}
      {kind === "tri" && (
        <g>
          <path d="M30 45V26" stroke="#0a5a0a" strokeWidth="2.5" />
          <path d="M30 19L26 28H34Z" fill="#0a6a0a" />
          <text x="27" y="13" fill="#139013" style={label}>Y</text>
          <path d="M30 45L47 50" stroke="#c81010" strokeWidth="3" />
          <path d="M57 51.500L46 53.500L49 45.500Z" fill="#c81010" />
          <text x="59" y="54" fill="#f03030" style={label}>X</text>
          <path d="M30 45L22 54" stroke="#0000a8" strokeWidth="3" />
          <path d="M16 58L18.500 50L25.500 55.500Z" fill="#0000a8" />
          <text x="11" y="60" fill="#3030f0" style={label}>Z</text>
        </g>
      )}
    </svg>
  );
}

function Pane({ title, box, kind, linked = true, children }: { title: string; box: string; kind: "front" | "left" | "top" | "tri"; linked?: boolean; children: React.ReactNode }) {
  return (
    <section aria-label={title} className="relative min-h-0 min-w-0 overflow-hidden bg-white">
      <svg className="absolute inset-0 h-full w-full" viewBox={box} preserveAspectRatio="xMidYMid meet" aria-label={`${title} view of the model`}>
        {children}
      </svg>
      <Triad kind={kind} />
      <div className="absolute bottom-0 left-[13px] flex h-[18px] items-center gap-[3px] text-[#111]">
        {linked && <Icon name="chain" size={16} />}
        <span className="text-[12px] font-bold">*{title}</span>
      </div>
    </section>
  );
}

function FrontModel() {
  return (
    <g transform="translate(420 150) scale(.33333)" stroke="#000" strokeWidth="3.5" strokeLinejoin="round">
      {[0, 60, 120, 180, 240, 300].map((a) => (
        <g key={a} transform={`rotate(${a} 686 585)`}>
          <path d="M1323 585L991 504A315.6 315.6 0 0 1 991 666Z" fill="#0ad6d6" />
          <path d="M991 504A315.6 315.6 0 0 1 991 666L840 627V543Z" fill="#d60ad6" />
        </g>
      ))}
      <circle cx="686" cy="585" r="174.5" fill="#d6d60a" />
      <circle cx="686" cy="585" r="123" fill="#2d2d2d" />
    </g>
  );
}

function LeftModel() {
  return (
    <g transform="translate(1440 140) scale(.33333)" stroke="#000" strokeWidth="3.5">
      <defs>
        <linearGradient id="lc1" x2="0" y2="1"><stop offset="0" stopColor="#30ffff" /><stop offset="1" stopColor="#00a8a8" /></linearGradient>
        <linearGradient id="lc2" x2="0" y2="1"><stop offset="0" stopColor="#007a7a" /><stop offset="1" stopColor="#004848" /></linearGradient>
        <linearGradient id="lo" x2="0" y2="1"><stop offset="0" stopColor="#6a3500" /><stop offset="1" stopColor="#9a4a00" /></linearGradient>
      </defs>
      <rect x="107" y="310" width="131" height="83" fill="#14ffff" />
      <rect x="107" y="490" width="131" height="42" fill="#10ffff" />
      <rect x="107" y="532" width="131" height="165" fill="url(#lc1)" />
      <rect x="107" y="697" width="131" height="42" fill="#006a6a" />
      <rect x="107" y="836" width="131" height="83" fill="url(#lc2)" />
      <rect x="128" y="62" width="89" height="331" fill="#2c2c2c" />
      <rect x="107" y="392" width="131" height="98" fill="#5f616e" />
      <rect x="129" y="490" width="88" height="42" fill="#cc660c" />
      <rect x="129" y="532" width="88" height="82" fill="#434343" />
      <rect x="129" y="614" width="88" height="83" fill="#151515" />
      <rect x="129" y="697" width="88" height="42" fill="url(#lo)" />
      <rect x="107" y="739" width="131" height="98" fill="#b7bbd7" />
      <rect x="128" y="837" width="89" height="330" fill="#626262" />
      <path d="M217 838V1168" stroke="#dd7400" strokeWidth="5" />
    </g>
  );
}

function TopModel() {
  return (
    <g transform="translate(420 570) scale(.33333)">
      <defs>
        <filter id="tb" x="-10%" y="-80%" width="120%" height="260%"><feGaussianBlur stdDeviation="22" /></filter>
        <linearGradient id="tc"><stop offset="0" stopColor="#00a8a8" /><stop offset="1" stopColor="#00f4f4" /></linearGradient>
        <linearGradient id="tc2"><stop offset="0" stopColor="#2cffff" /><stop offset="1" stopColor="#00f4f4" /></linearGradient>
        <linearGradient id="to"><stop offset="0" stopColor="#ee7008" /><stop offset="1" stopColor="#ffac38" /></linearGradient>
      </defs>
      <rect x="50" y="765" width="1275" height="80" fill="#777" fillOpacity=".6" filter="url(#tb)" />
      <rect x="370" y="735" width="630" height="128" fill="#777" fillOpacity=".5" filter="url(#tb)" />
      <g stroke="#000" strokeWidth="3.5">
        <rect x="371" y="733" width="629" height="132" fill="#006868" />
        <rect x="381" y="733" width="82" height="132" fill="#fff" />
        <rect x="463" y="733" width="142" height="132" fill="url(#tc)" />
        <rect x="640" y="733" width="91" height="132" fill="#14ffff" />
        <rect x="767" y="733" width="141" height="132" fill="url(#tc2)" />
        <rect x="908" y="733" width="82" height="132" fill="#c2cbea" />
        <rect x="990" y="733" width="10" height="132" fill="#00a8a8" />
        <rect x="47" y="755" width="319" height="88" fill="#434343" />
        <rect x="366" y="755" width="239" height="88" fill="#434343" />
        <rect x="605" y="733" width="35" height="132" fill="#a1a4bb" />
        <rect x="640" y="755" width="91" height="88" fill="url(#to)" />
        <rect x="731" y="733" width="36" height="132" fill="#4f505b" />
        <rect x="767" y="755" width="238" height="88" fill="#2a2a2a" />
        <rect x="1005" y="755" width="319" height="88" fill="#797979" />
      </g>
    </g>
  );
}

function TrimetricModel() {
  return (
    <g transform="translate(1270 570) scale(.33333)">
      <defs>
        <filter id="sb" x="-10%" y="-30%" width="120%" height="160%"><feGaussianBlur stdDeviation="16" /></filter>
        <linearGradient id="so" x2="1" y2="1"><stop offset="0" stopColor="#ff8a18" /><stop offset=".6" stopColor="#ff7a08" /><stop offset="1" stopColor="#a84c00" /></linearGradient>
      </defs>
      <path d="M95 1060L140 1055L420 1115L560 1150L1000 1265L1130 1320L1380 1388L1350 1408L1130 1370L960 1325L700 1265L430 1168L105 1085Z" fill="#666" fillOpacity=".85" stroke="#777" strokeWidth="14" strokeOpacity=".5" filter="url(#sb)" />
      <g stroke="#000" strokeWidth="3.5" strokeLinejoin="round">
        <path d="M655 540L700 490Q820 470 880 560Q930 620 930 700L880 790L700 700Z" fill="url(#so)" />

        <path d="M668 332H686L688 350L660 360Z" fill="#00a8a8" />
        <path d="M433 31L676 342L625 388L387 77Z" fill="#484848" />
        <path d="M387 77L625 388Q540 388 484 432Z" fill="#008e8e" />
        <path d="M484 432Q545 388 625 388L617 400Q535 405 478 438Z" fill="#00e0e0" />
        <path d="M625 388L686 333L724 475L653 541L617 400Z" fill="#b7bbd5" />
        <path d="M475 440Q540 402 617 400L653 541Q605 545 572 564Z" fill="#8e008e" />

        <path d="M107 487L447 500L392 548L63 535Z" fill="#3f3f3f" />
        <path d="M63 535L392 548L382 696Z" fill="#008e8e" />
        <path d="M460 490L572 545L572 564Q535 600 526 629L389 558Z" fill="#eaf2ff" />
        <path d="M389 558L526 629Q518 675 526 720L389 718Q370 640 389 558Z" fill="#8e008e" />
        <path d="M526 629L536 628Q530 670 539 712L526 720Q519 675 526 629Z" fill="#00c8c8" />

        <path d="M1083 209L850 379L788 437L937 551L995 494Z" fill="#202020" />
        <path d="M1034 259L798 434Q882 478 940 549Z" fill="#008e8e" />
        <path d="M850 379L1034 259L1083 209" fill="none" />

        <path d="M1080 658L1083 676L1060 690Z" fill="#00d8d8" />
        <path d="M1073 672L1409 843L1361 887L1022 717Z" fill="#494949" />
        <path d="M1022 717L1361 887L1022 877Q1040 800 1022 717Z" fill="#008e8e" />
        <path d="M873 725L942 656L1081 659L1010 726Z" fill="#c3c6e4" />
        <path d="M1010 726L1024 717Q1042 800 1018 880L1010 886Q1030 800 1010 726Z" fill="#00d0d0" />

        <path d="M988 948L1084 1300L1037 1345L938 996Z" fill="#3a3a3a" />
        <path d="M938 996L1037 1345L803 1045Q880 1035 938 996Z" fill="#008e8e" />
        <path d="M826 879L885 823L924 845L995 937L926 1003Z" fill="#e6ebff" />

        <path d="M580 788Q525 815 475 882L575 812Z" fill="#777a8c" />
        <path d="M655 870L703 860L688 932L614 1000Z" fill="#666978" />
        <path d="M478 890L614 1000L387 1167Z" fill="#008e8e" />
        <path d="M573 812L655 875L614 1000Q535 960 475 882Z" fill="#8e008e" />
        <path d="M573 812L583 802L665 865L655 875Z" fill="#00f0f0" />

        <path d="M748 893L826 872L826 882Q785 902 750 902Z" fill="#00c0c0" />
        <path d="M748 903Q795 900 826 879L926 1003Q860 1045 783 1046Z" fill="#8e008e" />

        <ellipse cx="705" cy="711" rx="201" ry="147" transform="rotate(49 705 711)" fill="#8e8e00" />
        <path d="M873 725L1010 726Q1030 800 1010 886L873 817Q882 775 873 725Z" fill="#8e008e" />
        <path d="M798 434Q882 478 940 549L924 565Q865 492 783 446Z" fill="#00ffff" />
        <path d="M783 446Q865 492 924 565L827 633Q795 595 746 568Z" fill="#8e008e" />
        <ellipse cx="710" cy="712" rx="141" ry="107" transform="rotate(49 710 712)" fill="#00f4f4" />
        <ellipse cx="700" cy="722" rx="141" ry="107" transform="rotate(47 700 722)" fill="#202020" />
      </g>
    </g>
  );
}

const headsUp: [string, boolean][] = [
  ["zoomFit", false], ["zoomArea", false], ["prevView", false], ["section", false], ["dynamic", false],
  ["orient", true], ["display", true], ["eye", true], ["ballPencil", false], ["scene", true], ["monitor", true],
];

function HeadsUpToolbar() {
  return (
    <div role="toolbar" aria-label="View" className="absolute inset-x-0 top-[4px] mr-[3px] flex h-6 items-center justify-center">
      {headsUp.map(([n, c]) => (
        <div key={n} className="flex items-center">
          <button aria-label={n} className="flex w-[26px] justify-center opacity-90"><Icon name={n} /></button>
          {c && <button aria-label={`${n} options`} className="flex h-5 w-[14px] items-center justify-center"><Caret className="text-[#999]" /></button>}
        </div>
      ))}
    </div>
  );
}

function Viewports() {
  return (
    <div className="relative grid min-w-0 flex-1 grid-cols-[841fr_845fr] grid-rows-[457fr_466fr] gap-1 border-r border-[#c8d4d4] bg-[#d8d8ee]">
      <Pane title="Front" kind="front" box="230 117 841 457"><FrontModel /></Pane>
      <Pane title="Left" kind="left" box="1075 117 845 457"><LeftModel /></Pane>
      <div className="relative grid min-h-0 min-w-0">
        <Pane title="Top" kind="top" box="230 578 841 466"><TopModel /></Pane>
        <HeadsUpToolbar />
      </div>
      <Pane title="Trimetric" kind="tri" box="1075 578 845 466" linked={false}><TrimetricModel /></Pane>
      <div className="pointer-events-none absolute inset-0 grid grid-cols-[841fr_845fr] grid-rows-[457fr_466fr] gap-1">
        {["Front", "Left", "Top", "Trimetric"].map((n) => (
          <div key={n} className="shadow-[0_0_0_1px_#54547a]" />
        ))}
      </div>
      <button aria-label="Collapse panel" className="absolute top-[444px] left-[-1px] flex h-[39px] w-[9px] items-center justify-center border-t border-r border-b border-[#808080] bg-[#f7f7f7]">
        <span className="size-[6px] rounded-full border border-[#999] bg-[#ccc]" />
      </button>
      <div className="absolute top-[6px] right-[5px] flex text-[#a0a0a0]">
        {[["paneLeft", "Expand left"], ["paneRight", "Expand right"], ["min", "Minimize view"], ["restore", "Restore view"], ["close", "Close view"]].map(([n, l]) => (
          <button key={n} aria-label={l} className="flex w-[26px] justify-center"><Icon name={n} /></button>
        ))}
      </div>
      <div className="absolute top-[50px] right-0 flex w-[25px] flex-col border-t border-l border-[#808080]">
        {[["compass", "3DEXPERIENCE"], ["home", "Resources"], ["books", "Design Library"], ["folder", "File Explorer"], ["palette", "View Palette"], ["ball", "Appearances"], ["props", "Custom Properties"]].map(([n, l]) => (
          <button key={n} aria-label={l} className={`flex h-6 items-center justify-center border-b border-[#808080] ${n === "home" ? "bg-[#f7f7f7]" : "bg-[#d4d4d4]"}`}>
            <Icon name={n} />
          </button>
        ))}
      </div>
    </div>
  );
}

function BottomTabs() {
  return (
    <nav aria-label="Document tabs" className="flex h-[16px] shrink-0 border-t border-b border-[#808080] bg-[#f7f7f7] leading-[12px]">
      <div className="flex w-[67px] border-r border-[#808080] bg-[#a9acb0]">
        {["M3 2V10M10 2L5 6L10 10Z", "M9 2L4 6L9 10Z", "M4 2L9 6L4 10Z", "M10 2V10M3 2L8 6L3 10Z"].map((d, i) => (
          <button key={d} aria-label={["First", "Previous", "Next", "Last"][i]} className="flex flex-1 items-center justify-center border-r border-[#c9ccd0]">
            <svg width="13" height="12" viewBox="0 0 13 12" aria-hidden="true"><path d={d} fill="#8d9094" stroke="#8d9094" /></svg>
          </button>
        ))}
      </div>
      <button className="w-[57px] border-r border-[#808080] pb-px text-[12px] font-bold">Model</button>
      <button className="w-[68px] border-r border-[#808080] bg-[#d4d4d4] pb-px">3D Views</button>
      <button className="w-[108px] border-r border-[#808080] bg-[#d4d4d4] pr-2 pb-px">Motion Study 1</button>
    </nav>
  );
}

function StatusBar() {
  return (
    <footer className="flex h-[18px] shrink-0 items-center bg-[#f7f7f7] pl-px">
      <span className="flex-1">SOLIDWORKS Premium 2024 SP1.0</span>
      <span className="w-[179px]">Editing Part</span>
      <button className="w-[50px] text-left">MMGS</button>
      <svg width="5" height="3" viewBox="0 0 5 3" className="mr-[28px] ml-[5px]" aria-hidden="true"><path d="M0 3H5L2.5 0Z" fill="#333" /></svg>
      <button aria-label="Tags" className="mr-[2px]"><Icon name="tag" size={16} /></button>
    </footer>
  );
}

export default function App() {
  return (
    <div className="flex h-screen min-h-[700px] flex-col overflow-hidden bg-white font-['Noto_Sans','Open_Sans',sans-serif] text-[11px] leading-4 text-black">
      <TitleBar />
      <Ribbon />
      <main className="relative flex min-h-0 flex-1">
        <RibbonTabs />
        <Sidebar />
        <Viewports />
      </main>
      <BottomTabs />
      <StatusBar />
      <div className="h-[2px] shrink-0 bg-[#333]" />
    </div>
  );
}
